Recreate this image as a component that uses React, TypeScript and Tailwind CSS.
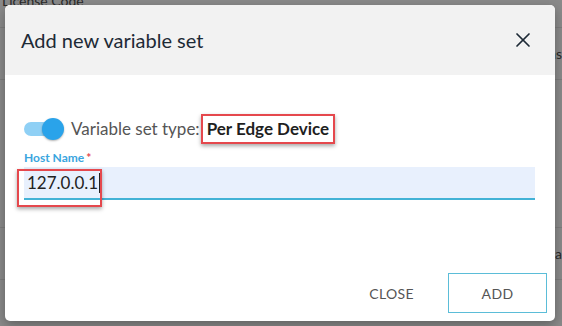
import { X } from 'lucide-react';

const font = { fontFamily: 'Lato, "Open Sans", sans-serif' };

function Switch() {
  return (
    <div className="relative h-[22px] w-[40px] shrink-0">
      <div className="absolute left-0 top-[4px] h-[14px] w-[36px] rounded-full bg-[#8fd0f5]" />
      <div className="absolute right-0 top-0 h-[22px] w-[22px] rounded-full bg-[#2aa3ea] shadow-[0_1px_2px_rgba(0,0,0,0.3)]" />
    </div>
  );
}

export default function App() {
  return (
    <div className="relative h-[326px] w-[562px] overflow-hidden bg-[#8a8a8a]" style={font}>
      {/* page behind the dialog */}
      <div className="flex flex-col text-[14px] text-[#2a2a2a]">
        <div className="-mt-[10px] h-[38px] border-b border-[#7d7d7d] pl-[2px]">License Code</div>
        <div className="flex h-[52px] items-center justify-end border-b border-[#7d7d7d]">ns</div>
        <div className="h-[148px] border-b border-[#7d7d7d]" />
        <div className="flex h-[52px] items-center justify-end border-b border-[#7d7d7d]">a</div>
      </div>

      <div className="absolute left-[5px] top-[5px] flex h-[316px] w-[550px] flex-col rounded-[5px] bg-white shadow-[0_4px_12px_rgba(0,0,0,0.3)]">
        <div className="flex h-[70px] shrink-0 items-center justify-between rounded-t-[5px] bg-[#f2f2f2] pl-[16px] pr-[20px]">
          <h2 className="text-[20px] text-[#1d2a36]">Add new variable set</h2>
          <X className="h-[24px] w-[24px] text-[#1d2a36]" strokeWidth={1.7} />
        </div>

        <div className="flex flex-1 flex-col pl-[19px] pr-[20px]">
          <div className="mt-[39px] flex h-[30px] items-center">
            <Switch />
            <span className="ml-[7px] text-[17px] text-[#555]">Variable set type:</span>
            <span className="ml-[1px] flex h-[30px] items-center border-2 border-[#e5484d] px-[4px] text-[17px] font-bold text-[#1f1f1f] shadow-[0_2px_4px_rgba(0,0,0,0.35)]">
              Per Edge Device
            </span>
          </div>

          <div className="mt-[7px] text-[12px] font-bold leading-[14px] text-[#3aa5de]">
            Host Name<span className="ml-[2px] text-[#e5484d]">*</span>
          </div>

          <div className="relative mt-[2px] flex h-[33px] items-center border-b-2 border-[#42b2d6] bg-[#e8f0fd] pl-[3px]">
            <span className="text-[17px] text-[#222]">127.0.0.1</span>
            <span className="ml-[1px] h-[20px] w-px bg-[#222]" />
            <div className="absolute -left-[7px] top-[2px] h-[38px] w-[85px] border-2 border-[#e5484d] shadow-[0_2px_4px_rgba(0,0,0,0.35)]" />
          </div>

          <div className="mt-auto mb-[8px] -mr-[12px] flex items-center justify-end gap-[12px]">
            <button className="h-[40px] px-[22px] text-[14px] tracking-wide text-[#555]">CLOSE</button>
            <button className="h-[40px] w-[99px] border border-[#5bbdd8] text-[14px] tracking-wide text-[#555]">ADD</button>
          </div>
        </div>
      </div>
    </div>
  );
}
